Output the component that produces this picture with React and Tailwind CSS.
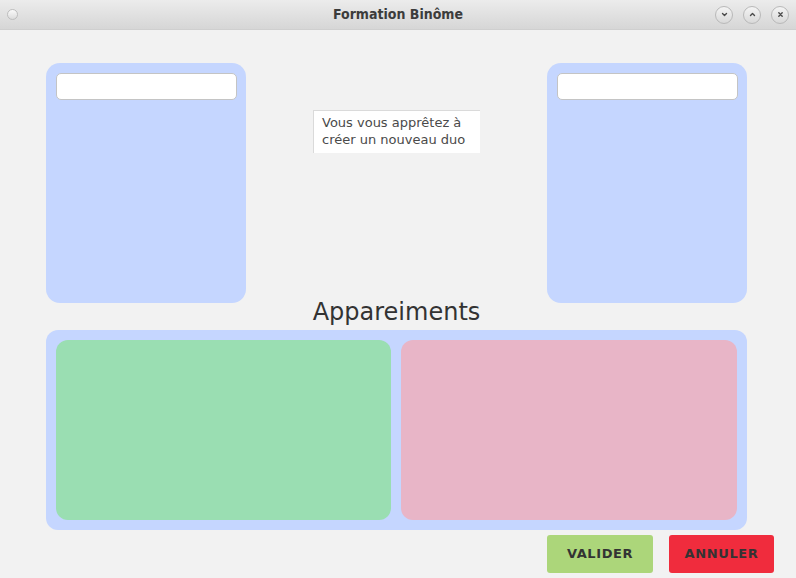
import React from "react";

function WinButton({ children }) {
  return (
    <div className="w-[18px] h-[18px] rounded-full border border-[#b9b9b9] bg-gradient-to-b from-[#f4f4f4] to-[#d9d9d9] flex items-center justify-center">
      <svg width="9" height="9" viewBox="0 0 9 9" fill="none" stroke="#4a4a4a" strokeWidth="1.4" strokeLinecap="round" strokeLinejoin="round">
        {children}
      </svg>
    </div>
  );
}

export default function App() {
  return (
    <div className="w-[796px] h-[578px] bg-[#f2f2f2] flex flex-col overflow-hidden font-['DejaVu_Sans',sans-serif]">
      {/* barre de titre */}
      <div className="h-[30px] grid grid-cols-[1fr_auto_1fr] items-center px-[7px] bg-gradient-to-b from-[#ececec] to-[#d6d6d6] border-b border-[#cfcfcf]">
        <div className="w-[11px] h-[11px] rounded-full border border-[#bdbdbd] bg-gradient-to-b from-[#fafafa] to-[#dcdcdc]" />
        <div className="text-center text-[14px] font-bold text-[#3c3c3c] font-['DejaVu_Sans_Condensed','DejaVu_Sans',sans-serif]">
          Formation Binôme
        </div>
        <div className="flex justify-end gap-[10px]">
          <WinButton>
            <path d="M2.5 3.5 L4.5 5.5 L6.5 3.5" />
          </WinButton>
          <WinButton>
            <path d="M2.5 5.5 L4.5 3.5 L6.5 5.5" />
          </WinButton>
          <WinButton>
            <path d="M2.8 2.8 L6.2 6.2 M6.2 2.8 L2.8 6.2" />
          </WinButton>
        </div>
      </div>

      {/* ligne du haut */}
      <div className="flex pl-[46px] pt-[33px]">
        <div className="w-[200px] h-[240px] bg-[#c5d6ff] rounded-[14px] p-[10px] pr-[9px]">
          <div className="h-[27px] bg-white border border-[#c4c4c4] rounded-[5px]" />
        </div>
        <div className="w-[301px] flex justify-center pt-[47px]">
          <div className="w-[167px] h-[43px] bg-white border-t border-l border-[#dadada] pl-[8px] pt-[3px] text-[13px] leading-[17px] text-[#4a4a4a]">
            Vous vous apprêtez à
            <br />
            créer un nouveau duo
          </div>
        </div>
        <div className="w-[200px] h-[240px] bg-[#c5d6ff] rounded-[14px] p-[10px] pr-[9px]">
          <div className="h-[27px] bg-white border border-[#c4c4c4] rounded-[5px]" />
        </div>
      </div>

      {/* appareiments */}
      <div className="w-[701px] ml-[46px] h-[27px] flex items-center justify-center pb-[9px] text-[24px] leading-none text-[#333333]">
        Appareiments
      </div>
      <div className="w-[701px] ml-[46px] h-[200px] bg-[#c5d6ff] rounded-[12px] p-[10px] flex gap-[10px]">
        <div className="w-[335px] bg-[#9adeb2] rounded-[12px]" />
        <div className="flex-1 bg-[#e8b5c7] rounded-[12px]" />
      </div>

      {/* boutons */}
      <div className="flex justify-end gap-[16px] pr-[22px] pt-[5px]">
        <button className="w-[106px] h-[38px] bg-[#acd67a] rounded-[3px] text-[13px] font-bold tracking-[0.6px] text-[#333333]">
          VALIDER
        </button>
        <button className="w-[105px] h-[38px] bg-[#f02c3d] rounded-[3px] text-[13px] font-bold tracking-[0.6px] text-[#333333]">
          ANNULER
        </button>
      </div>
    </div>
  );
}
